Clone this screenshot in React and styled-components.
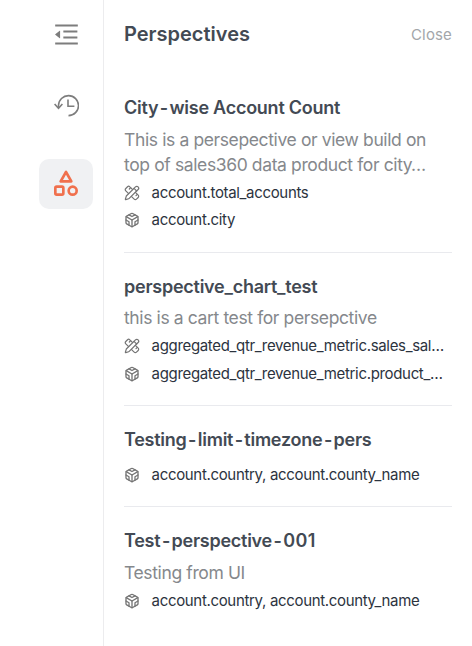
import React from 'react';
import styled, { createGlobalStyle } from 'styled-components';
import { TbTriangleSquareCircle } from 'react-icons/tb';
import { AiOutlineMenuFold } from 'react-icons/ai';
import { FiCodesandbox } from 'react-icons/fi';
import { PencilRuler } from 'lucide-react';

const GlobalStyle = createGlobalStyle`
  * { box-sizing: border-box; }
  body {
    margin: 0;
    background: #fff;
    font-family: Inter, "Liberation Sans", sans-serif;
  }
`;

const Layout = styled.div`
  display: flex;
  height: 646px;
  overflow: hidden;
`;

const Sidebar = styled.nav`
  display: flex;
  flex-direction: column;
  align-items: flex-end;
  gap: 22px;
  width: 104px;
  padding: 9px 10px 0 0;
  border-right: 1px solid #ececee;
`;

const NavButton = styled.button`
  display: flex;
  align-items: center;
  justify-content: center;
  width: 54px;
  height: 50px;
  padding: 0;
  border: 0;
  border-radius: 10px;
  margin-top: ${({ $active }) => ($active ? 6 : 0)}px;
  background: ${({ $active }) => ($active ? '#f0f1f3' : 'transparent')};
  color: ${({ $active }) => ($active ? '#f0704d' : '#7d7d7d')};
`;

const Panel = styled.main`
  width: 348px;
  padding-left: 20px;
`;

const Header = styled.header`
  display: flex;
  align-items: center;
  justify-content: space-between;
  height: 68px;
`;

const Heading = styled.h1`
  margin: 0;
  font-size: 20px;
  font-weight: 600;
  color: #434a54;
`;

const Close = styled.button`
  padding: 0;
  border: 0;
  background: none;
  font: 400 15px Inter, sans-serif;
  letter-spacing: 0.15px;
  color: #a3a6aa;
`;

const Card = styled.article`
  height: ${({ $height }) => $height}px;
  padding-top: 21px;
  border-bottom: ${({ $last }) => ($last ? '0' : '1px solid #e9eaee')};
`;

const List = styled.section`
  padding-top: 6px;
`;

const Title = styled.h2`
  margin: 0 0 ${({ $gap }) => $gap}px;
  font-size: 18px;
  line-height: 26px;
  font-weight: 600;
  letter-spacing: -0.25px;
  white-space: nowrap;
  color: #434a54;
`;

const Hyphen = styled.span`
  padding: 0 1.5px;
`;

const Digits = styled.span`
  letter-spacing: 0.45px;
`;

const Description = styled.p`
  margin: 0 0 2px;
  font-size: 17.5px;
  line-height: 25px;
  letter-spacing: -0.38px;
  color: #85888c;
`;

const Field = styled.div`
  display: flex;
  align-items: center;
  gap: 11.6px;
  height: 27.5px;
  color: #757575;
  svg { flex: none; }
`;

const FieldText = styled.span`
  white-space: nowrap;
  font-size: 15px;
  line-height: 24px;
  letter-spacing: -0.33px;
  color: #2c333e;
`;

const HistoryIcon = () => (
  <svg width="26" height="24" viewBox="0 0 26 24" fill="none" stroke="currentColor" strokeWidth="1.6">
    <path d="M5.5 14V11.5A10 10 0 1 1 15.5 21.6" />
    <path d="M1.6 10L5.5 14.2L9.4 10" />
    <path d="M15 5.5V12.3H21.4" />
  </svg>
);

const perspectives = [
  {
    title: 'City-wise Account Count',
    description: 'This is a persepective or view build on top of sales360 data product for city…',
    measures: 'account.total_accounts',
    dimensions: 'account.city',
    height: 179,
    gap: 6,
  },
  {
    title: 'perspective_chart_test',
    description: 'this is a cart test for persepctive',
    measures: 'aggregated_qtr_revenue_metric.sales_sal…',
    dimensions: 'aggregated_qtr_revenue_metric.product_…',
    height: 153,
    gap: 5.4,
  },
  {
    title: 'Testing-limit-timezone-pers',
    dimensions: 'account.country, account.county_name',
    height: 101,
    gap: 8,
  },
  {
    title: 'Test-perspective-001',
    description: 'Testing from UI',
    dimensions: 'account.country, account.county_name',
    height: 139,
    gap: 6,
  },
];

const SpacedTitle = ({ text }) =>
  text.split('-').map((part, i) => (
    <React.Fragment key={i}>
      {i > 0 && <Hyphen>-</Hyphen>}
      {/^\d+$/.test(part) ? <Digits>{part}</Digits> : part}
    </React.Fragment>
  ));

export default function App() {
  return (
    <>
      <GlobalStyle />
      <Layout>
        <Sidebar>
          <NavButton aria-label="Collapse"><AiOutlineMenuFold size={29} /></NavButton>
          <NavButton aria-label="History"><HistoryIcon /></NavButton>
          <NavButton aria-label="Perspectives" $active><TbTriangleSquareCircle size={32} /></NavButton>
        </Sidebar>
        <Panel>
          <Header>
            <Heading>Perspectives</Heading>
            <Close>Close</Close>
          </Header>
          <List>
            {perspectives.map((p, i) => (
              <Card key={p.title} $height={p.height} $last={i === perspectives.length - 1}>
                <Title $gap={p.gap}><SpacedTitle text={p.title} /></Title>
                {p.description && <Description>{p.description}</Description>}
                {p.measures && (
                  <Field><PencilRuler size={16} strokeWidth={1.8} /><FieldText>{p.measures}</FieldText></Field>
                )}
                <Field><FiCodesandbox size={16} /><FieldText>{p.dimensions}</FieldText></Field>
              </Card>
            ))}
          </List>
        </Panel>
      </Layout>
    </>
  );
}
